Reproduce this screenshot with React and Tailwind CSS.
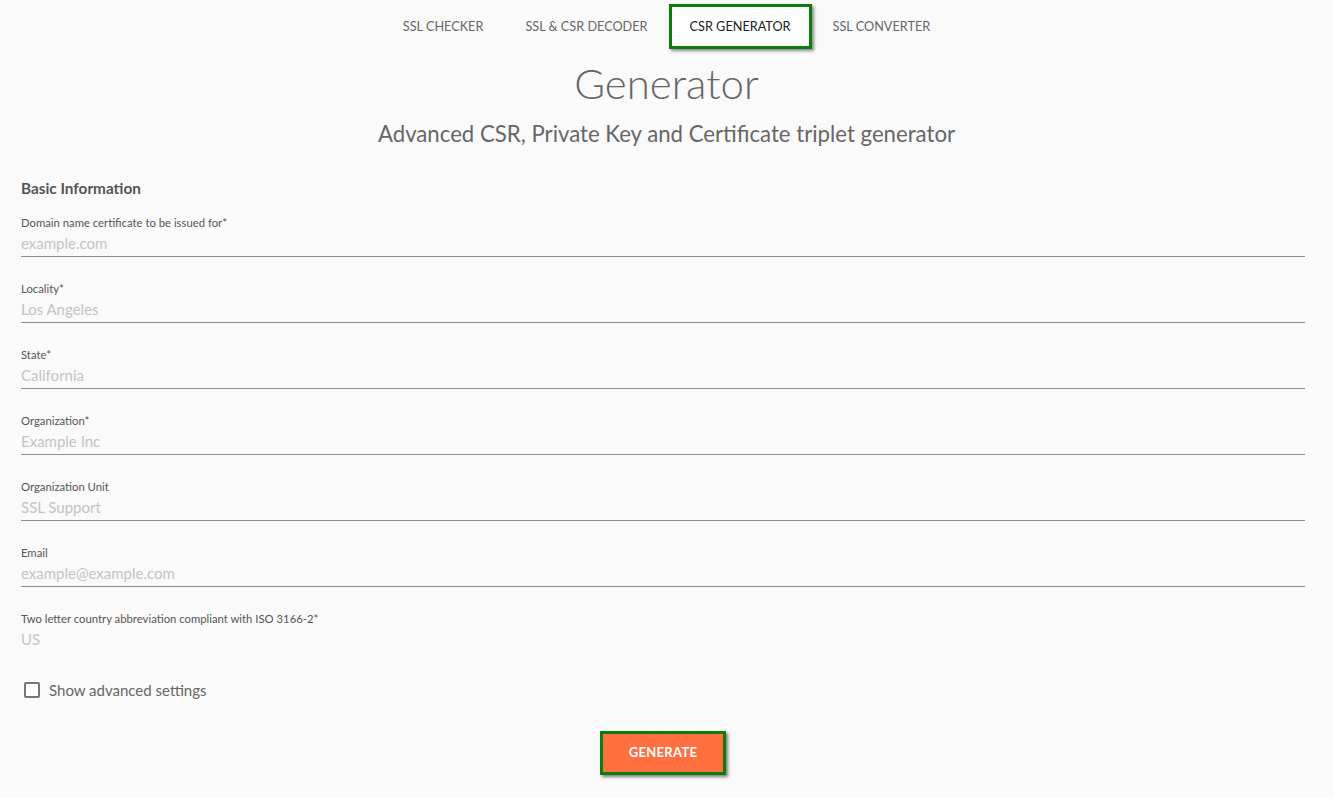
import { useState } from "react";

const tabs = ["SSL CHECKER", "SSL & CSR DECODER", "CSR GENERATOR", "SSL CONVERTER"];

const fields = [
  { label: "Domain name certificate to be issued for*", placeholder: "example.com" },
  { label: "Locality*", placeholder: "Los Angeles" },
  { label: "State*", placeholder: "California" },
  { label: "Organization*", placeholder: "Example Inc" },
  { label: "Organization Unit", placeholder: "SSL Support" },
  { label: "Email", placeholder: "example@example.com" },
  { label: "Two letter country abbreviation compliant with ISO 3166-2*", placeholder: "US", noLine: true },
];

const App = () => {
  const [advanced, setAdvanced] = useState(false);

  return (
    <div className="min-h-screen bg-[#fafafa] text-[#555] font-['Lato','Open_Sans',sans-serif]">
      <nav className="flex justify-center pt-[4px]">
        {tabs.map((t) => (
          <div
            key={t}
            className={`h-[45px] px-[18px] pt-[1px] flex items-center text-[12.7px] ${
              t === "CSR GENERATOR"
                ? "border-[3px] border-[#0a7d0a] text-[#222] shadow-[2px_2px_3px_rgba(0,0,0,0.45)] bg-white"
                : "text-[#666] border-[3px] border-transparent"
            }`}
          >
            {t}
          </div>
        ))}
      </nav>

      <h1 className="text-center text-[42px] font-light text-[#666] leading-none mt-[13px]">
        Generator
      </h1>
      <p className="text-center text-[22.2px] text-[#666] mt-[19px] leading-none">
        Advanced CSR, Private Key and Certificate triplet generator
      </p>

      <form className="pl-[21px] pr-[28px] mt-[36px]">
        <h2 className="text-[15.3px] font-bold text-[#555] leading-none">Basic Information</h2>
        <div className="mt-[19px]">
          {fields.map((f) => (
            <div
              key={f.label}
              className={`pb-[4px] mb-[25px] ${f.noLine ? "" : "border-b border-[#8c8c8c]"}`}
            >
              <label className="block text-[11.3px] text-[#555] leading-[14px]">{f.label}</label>
              <input
                className="block w-full bg-transparent outline-none text-[15px] leading-[18px] mt-[4px] placeholder:text-[#c4c4c4]"
                placeholder={f.placeholder}
              />
            </div>
          ))}
        </div>

        <label className="flex items-center gap-[9px] ml-[3px] mt-[28px] text-[15px] leading-[20px] text-[#666] cursor-pointer">
          <input
            type="checkbox"
            checked={advanced}
            onChange={() => setAdvanced(!advanced)}
            className="appearance-none w-[16px] h-[16px] border-2 border-[#777] rounded-[2px] bg-white"
          />
          Show advanced settings
        </label>

        <div className="flex justify-center mt-[31px] pb-[24px]">
          <button
            type="button"
            className="w-[126px] h-[44px] bg-[#ff6f3f] border-[3px] border-[#0a7d0a] text-white text-[13px] font-bold tracking-[0.3px] shadow-[2px_2px_3px_rgba(0,0,0,0.5)]"
          >
            GENERATE
          </button>
        </div>
      </form>
    </div>
  );
};

export default App;
